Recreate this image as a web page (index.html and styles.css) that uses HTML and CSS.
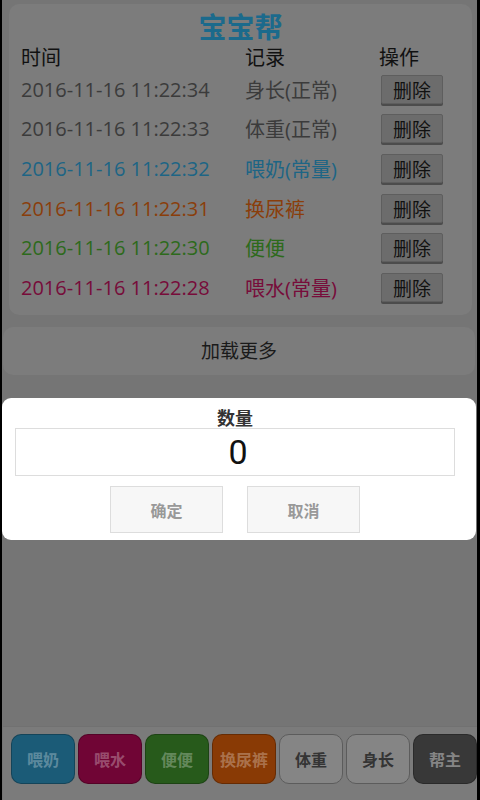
FILE: index.html
```html
<!DOCTYPE html>
<html lang="zh-CN">
<head>
    <meta charset="UTF-8">
    <meta name="viewport" content="width=device-width, initial-scale=1.0">
    <title>宝宝帮</title>
    <link rel="stylesheet" href="styles.css">
</head>
<body>
    <div class="screen">
        <div class="card">
            <h1>宝宝帮</h1>
            <div class="row head">
                <span>时间</span>
                <span>记录</span>
                <span>操作</span>
            </div>
            <div class="row grey">
                <span>2016-11-16 11:22:34</span>
                <span>身长(正常)</span>
                <span><button class="del">删除</button></span>
            </div>
            <div class="row grey">
                <span>2016-11-16 11:22:33</span>
                <span>体重(正常)</span>
                <span><button class="del">删除</button></span>
            </div>
            <div class="row blue">
                <span>2016-11-16 11:22:32</span>
                <span>喂奶(常量)</span>
                <span><button class="del">删除</button></span>
            </div>
            <div class="row orange">
                <span>2016-11-16 11:22:31</span>
                <span>换尿裤</span>
                <span><button class="del">删除</button></span>
            </div>
            <div class="row green">
                <span>2016-11-16 11:22:30</span>
                <span>便便</span>
                <span><button class="del">删除</button></span>
            </div>
            <div class="row red">
                <span>2016-11-16 11:22:28</span>
                <span>喂水(常量)</span>
                <span><button class="del">删除</button></span>
            </div>
        </div>

        <div class="more">加载更多</div>

        <div class="footer">
            <button class="tab t-blue">喂奶</button>
            <button class="tab t-red">喂水</button>
            <button class="tab t-green">便便</button>
            <button class="tab t-orange">换尿裤</button>
            <button class="tab t-grey">体重</button>
            <button class="tab t-grey">身长</button>
            <button class="tab t-dark">帮主</button>
        </div>

        <div class="dialog">
            <div class="dialog-title">数量</div>
            <input class="amount" type="text" value="0">
            <div class="actions">
                <button class="act">确定</button>
                <button class="act">取消</button>
            </div>
        </div>
    </div>
</body>
</html>
```

FILE: styles.css
```css
html, body {
    margin: 0;
    padding: 0;
    background-color: #000;
}
body {
    font-family: "Open Sans", "Noto Sans CJK SC", sans-serif;
}
.screen {
    position: relative;
    box-sizing: border-box;
    margin: 0 3px 0 2px;
    height: 800px;
    background-color: #757575;
    display: flex;
    flex-direction: column;
    overflow: hidden;
}
.card {
    margin: 4px 5px 0 7px;
    padding: 8px 12px 8px;
    background-color: #7c7c7c;
    border-radius: 10px;
}
h1 {
    margin: 0;
    height: 30px;
    line-height: 30px;
    text-align: center;
    font-size: 28px;
    font-weight: bold;
    color: #1b6a8c;
}
.row {
    display: grid;
    grid-template-columns: 224px 134px 1fr;
    align-items: center;
    height: 39.6px;
    font-size: 20px;
}
.row.head {
    height: 27.5px;
    color: #111;
}
.grey { color: #3b3b3b; }
.blue { color: #1d6585; }
.orange { color: #8a3e0b; }
.green { color: #2d6a1b; }
.red { color: #770c3a; }
.del {
    margin-left: 2px;
    width: 62px;
    height: 29px;
    padding: 0;
    font-family: "Noto Sans CJK SC", sans-serif;
    font-size: 19px;
    color: #111;
    background-color: #6c6c6c;
    border: 1px solid #5e5e5e;
    border-radius: 2px;
    box-shadow: 0 2px 0 #4c4c4c;
}
.more {
    margin: 12px 2px 0 1px;
    height: 48px;
    line-height: 48px;
    text-align: center;
    font-size: 19px;
    color: #1a1a1a;
    background-color: #7c7c7c;
    border-radius: 10px;
}
.footer {
    margin-top: auto;
    margin-left: 1px;
    height: 74px;
    padding: 7px 0 0 8px;
    box-sizing: border-box;
    display: flex;
    gap: 3px;
    background-color: #7b7b7b;
    border-top: 1px solid #717171;
}
.tab {
    flex: 0 0 64px;
    height: 50px;
    padding: 0;
    border-radius: 10px;
    border: 1px solid rgba(0,0,0,0.25);
    font-family: "Noto Sans CJK SC", sans-serif;
    font-size: 16px;
    font-weight: bold;
    color: rgba(255,255,255,0.3);
}
.t-blue { background-color: #1b5b77; }
.t-red { background-color: #700535; }
.t-green { background-color: #275a1b; }
.t-orange { background-color: #893a05; }
.t-grey {
    background-color: #858585;
    border-color: #5c5c5c;
    color: #343434;
}
.t-dark {
    background-color: #383838;
    color: #858585;
}
.dialog {
    position: absolute;
    top: 398px;
    left: 0;
    right: 1px;
    height: 142px;
    box-sizing: border-box;
    padding: 9px 0 0 13px;
    background-color: #fff;
    border-radius: 9px;
}
.dialog-title {
    width: 440px;
    height: 21px;
    line-height: 21px;
    text-align: center;
    font-family: "Noto Sans CJK SC", sans-serif;
    font-size: 18px;
    font-weight: bold;
    color: #333;
}
.amount {
    display: block;
    box-sizing: border-box;
    width: 440px;
    height: 48px;
    margin: 0;
    padding: 0 0 0 6px;
    border: 1px solid #ddd;
    text-align: center;
    font-family: Roboto, sans-serif;
    font-size: 34px;
    color: #111;
    outline: none;
}
.actions {
    width: 440px;
    margin-top: 10px;
    display: flex;
    justify-content: center;
    gap: 24px;
}
.act {
    width: 113px;
    height: 47px;
    padding: 0;
    background-color: #f7f7f7;
    border: 1px solid #ddd;
    font-family: "Noto Sans CJK SC", sans-serif;
    font-size: 16px;
    font-weight: bold;
    color: #999;
}
```
